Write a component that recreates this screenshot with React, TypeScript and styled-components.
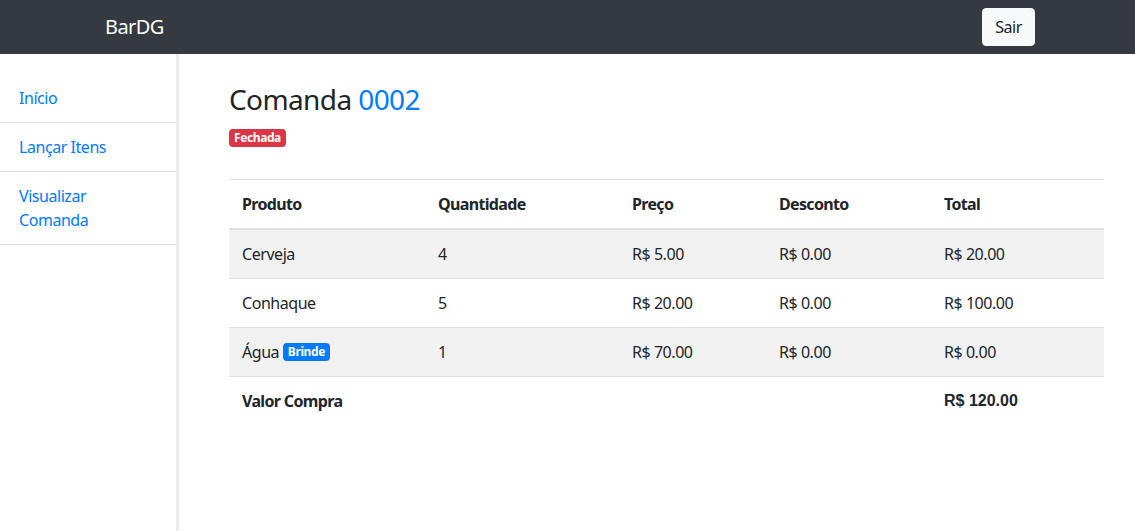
import React from "react";
import styled, { createGlobalStyle } from "styled-components";

const Global = createGlobalStyle`
  * { box-sizing: border-box; }
  html, body { margin: 0; padding: 0; }
  body {
    font-family: "Noto Sans", "Open Sans", sans-serif;
    font-size: 16px;
    line-height: 1.5;
    letter-spacing: -0.45px;
    color: #212529;
    background: #fff;
  }
`;

const Page = styled.div`
  display: flex;
  flex-direction: column;
  min-height: 531px;
`;

const NavBar = styled.nav`
  height: 54px;
  background: #343a40;
  display: flex;
  align-items: center;
  justify-content: space-between;
  padding: 0 100px 0 105px;
`;

const Brand = styled.a`
  color: #fff;
  font-size: 20px;
  line-height: 30px;
  letter-spacing: -0.6px;
  text-decoration: none;
`;

const LightButton = styled.button`
  font-family: inherit;
  font-size: 16px;
  letter-spacing: -0.45px;
  line-height: 24px;
  height: 38px;
  width: 53px;
  padding: 6px 0;
  text-align: center;
  border: 1px solid #f8f9fa;
  border-radius: 4px;
  background: #f8f9fa;
  color: #212529;
`;

const Body = styled.div`
  flex: 1;
  display: flex;
`;

const Sidebar = styled.aside`
  width: 179px;
  flex: none;
  border-right: 3px solid #ebebeb;
  padding-top: 20px;
`;

const NavItem = styled.a`
  display: block;
  padding: 12px 19px;
  color: #007bff;
  text-decoration: none;
  border-bottom: 1px solid #dee2e6;
`;

const Main = styled.main`
  flex: 1;
  padding: 29px 31px 0 50px;
`;

const Title = styled.h2`
  margin: 0 0 9px;
  font-size: 28px;
  font-weight: 400;
  line-height: 1.2;
  letter-spacing: -0.6px;
`;

const TitleNumber = styled.span`
  color: #007bff;
`;

const Badge = styled.span<{ $tone: "danger" | "primary" }>`
  display: inline-block;
  padding: 1px 5px 2px;
  font-size: 12px;
  font-weight: 700;
  line-height: 15px;
  letter-spacing: -0.4px;
  border-radius: 4px;
  color: #fff;
  vertical-align: 2px;
  background: ${(p) => (p.$tone === "danger" ? "#dc3545" : "#007bff")};
`;

const Table = styled.table`
  width: 100%;
  margin-top: 29px;
  border-collapse: collapse;
`;

const Th = styled.th`
  text-align: left;
  font-weight: 700;
  letter-spacing: -0.65px;
  padding: 12px 13px;
  border-top: 1px solid #dee2e6;
  border-bottom: 2px solid #dee2e6;
`;

const Row = styled.tr<{ $striped?: boolean }>`
  background: ${(p) => (p.$striped ? "#f2f2f2" : "transparent")};
`;

const Td = styled.td<{ $bold?: boolean; $alt?: boolean }>`
  padding: 12px 13px;
  border-top: 1px solid #dee2e6;
  font-weight: ${(p) => (p.$bold ? 700 : 400)};
  letter-spacing: ${(p) => (p.$alt ? "0" : p.$bold ? "-0.65px" : "-0.45px")};
  font-family: ${(p) => (p.$alt ? '"Liberation Sans", Arial, sans-serif' : "inherit")};
`;

const rows = [
  { p: "Cerveja", q: "4", pr: "R$ 5.00", d: "R$ 0.00", t: "R$ 20.00" },
  { p: "Conhaque", q: "5", pr: "R$ 20.00", d: "R$ 0.00", t: "R$ 100.00" },
  { p: "Água", brinde: true, q: "1", pr: "R$ 70.00", d: "R$ 0.00", t: "R$ 0.00" },
];

export default function App() {
  return (
    <Page>
      <Global />
      <NavBar>
        <Brand href="#">BarDG</Brand>
        <LightButton>Sair</LightButton>
      </NavBar>
      <Body>
        <Sidebar>
          <NavItem href="#">Início</NavItem>
          <NavItem href="#">Lançar Itens</NavItem>
          <NavItem href="#">
            Visualizar
            <br />
            Comanda
          </NavItem>
        </Sidebar>
        <Main>
          <Title>
            Comanda <TitleNumber>0002</TitleNumber>
          </Title>
          <Badge $tone="danger">Fechada</Badge>
          <Table>
            <colgroup>
              <col style={{ width: 196 }} />
              <col style={{ width: 194 }} />
              <col style={{ width: 147 }} />
              <col style={{ width: 165 }} />
              <col />
            </colgroup>
            <thead>
              <tr>
                <Th>Produto</Th>
                <Th>Quantidade</Th>
                <Th>Preço</Th>
                <Th>Desconto</Th>
                <Th>Total</Th>
              </tr>
            </thead>
            <tbody>
              {rows.map((r, i) => (
                <Row key={r.p} $striped={i % 2 === 0}>
                  <Td>
                    {r.p} {r.brinde && <Badge $tone="primary">Brinde</Badge>}
                  </Td>
                  <Td>{r.q}</Td>
                  <Td>{r.pr}</Td>
                  <Td>{r.d}</Td>
                  <Td>{r.t}</Td>
                </Row>
              ))}
              <Row>
                <Td $bold>Valor Compra</Td>
                <Td />
                <Td />
                <Td />
                <Td $bold $alt>R$ 120.00</Td>
              </Row>
            </tbody>
          </Table>
        </Main>
      </Body>
    </Page>
  );
}
